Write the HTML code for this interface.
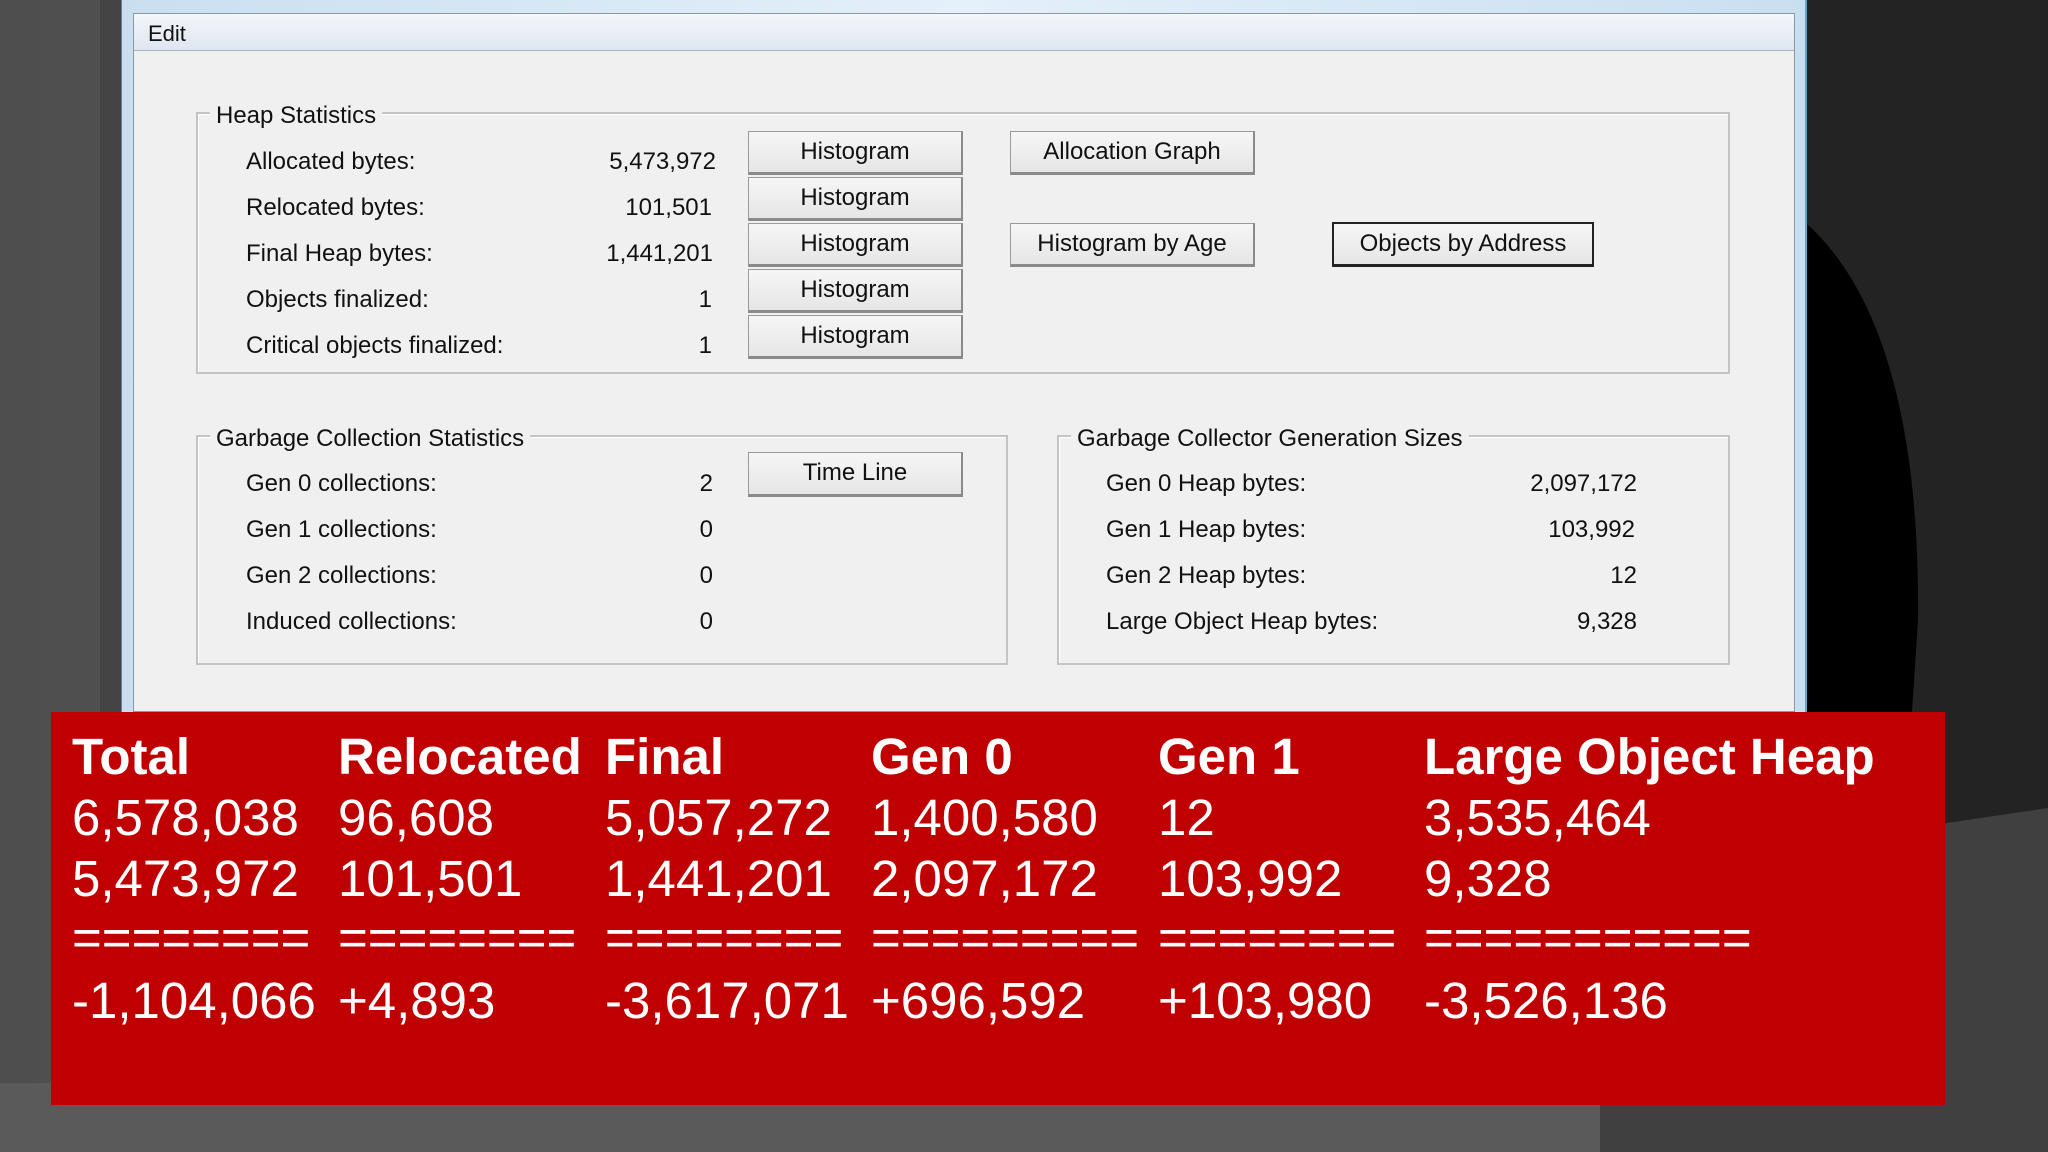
<!DOCTYPE html>
<html><head><meta charset="utf-8"><style>
*{margin:0;padding:0;box-sizing:border-box}
body{width:2048px;height:1152px;overflow:hidden;position:relative;background:linear-gradient(90deg,#4e4e4e,#5a5a5a 40%,#4a4a4a);font-family:"Liberation Sans",sans-serif}
.abs{position:absolute}
.win{left:121px;top:0;width:1686px;height:712px;background:linear-gradient(90deg,#c9dff0,#e4f0fa 50%,#c9dff0);border-left:1px solid #6a7f95;border-right:2px solid #5fa8c8}
.client{left:133px;top:13px;width:1662px;height:699px;background:#f0f0f0;border:1px solid #8a98a8}
.menu{left:0;top:0;width:100%;height:37px;background:linear-gradient(#f4f7fb,#dfe6f0);border-bottom:1px solid #aab4c2;font-size:22px;color:#111;padding:7px 14px}
.grp{border:2px solid #c4c4c4;box-shadow:inset 1px 1px 0 #fff}
.gt{background:#f0f0f0;font-size:24px;color:#111;padding:0 6px;top:-12px;left:12px;white-space:nowrap}
.t{font-size:24px;color:#111;white-space:nowrap}
.v{font-size:24px;color:#111;text-align:right;white-space:nowrap}
.btn{background:linear-gradient(#f6f6f6,#e6e6e6);border:1px solid #9a9a9a;border-bottom:3px solid #8a8a8a;border-right:2px solid #8a8a8a;font-size:24px;color:#111;text-align:center;line-height:40px}
.red{left:51px;top:712px;width:1894px;height:393px;background:#c00000}
.r{color:#fff;font-size:51px;white-space:nowrap;line-height:1}
.h{font-weight:bold}
.eq{font-size:51px;top:912px}
</style></head><body>
<div class="abs" style="left:1807px;top:0;width:241px;height:1152px;background:#232323"></div>
<svg class="abs" style="left:0;top:0" width="2048" height="1152"><path d="M1807 224 C1880 290 1920 420 1918 620 L1912 712 L1807 712Z" fill="#000"/><path d="M1900 830 L2048 808 L2048 1152 L1900 1152Z" fill="#414041"/></svg>
<div class="abs" style="left:1600px;top:1100px;width:448px;height:52px;background:#414041"></div>
<div class="abs" style="left:0;top:1083px;width:1600px;height:69px;background:#5a5a5a"></div>
<div class="abs" style="left:100px;top:0;width:21px;height:712px;background:#444"></div>

<div class="abs win"></div>
<div class="abs client">
 <div class="abs menu">Edit</div>
</div>

<div class="abs grp" style="left:196px;top:112px;width:1534px;height:262px"><div class="abs gt">Heap Statistics</div></div>
<div class="abs t" style="left:246px;top:148px">Allocated bytes:</div>
<div class="abs t" style="left:246px;top:194px">Relocated bytes:</div>
<div class="abs t" style="left:246px;top:240px">Final Heap bytes:</div>
<div class="abs t" style="left:246px;top:286px">Objects finalized:</div>
<div class="abs t" style="left:246px;top:332px">Critical objects finalized:</div>
<div class="abs v" style="left:516px;width:200px;top:148px">5,473,972</div>
<div class="abs v" style="left:516px;width:196px;top:194px">101,501</div>
<div class="abs v" style="left:516px;width:197px;top:240px">1,441,201</div>
<div class="abs v" style="left:516px;width:196px;top:286px">1</div>
<div class="abs v" style="left:516px;width:196px;top:332px">1</div>
<div class="abs btn" style="left:748px;top:131px;width:215px;height:44px">Histogram</div>
<div class="abs btn" style="left:748px;top:177px;width:215px;height:44px">Histogram</div>
<div class="abs btn" style="left:748px;top:223px;width:215px;height:44px">Histogram</div>
<div class="abs btn" style="left:748px;top:269px;width:215px;height:44px">Histogram</div>
<div class="abs btn" style="left:748px;top:315px;width:215px;height:44px">Histogram</div>
<div class="abs btn" style="left:1010px;top:131px;width:245px;height:44px">Allocation Graph</div>
<div class="abs btn" style="left:1010px;top:223px;width:245px;height:44px">Histogram by Age</div>
<div class="abs btn" style="left:1332px;top:222px;width:262px;height:45px;border:2px solid #222;border-bottom:3px solid #222">Objects by Address</div>

<div class="abs grp" style="left:196px;top:435px;width:812px;height:230px"><div class="abs gt">Garbage Collection Statistics</div></div>
<div class="abs t" style="left:246px;top:470px">Gen 0 collections:</div>
<div class="abs t" style="left:246px;top:516px">Gen 1 collections:</div>
<div class="abs t" style="left:246px;top:562px">Gen 2 collections:</div>
<div class="abs t" style="left:246px;top:608px">Induced collections:</div>
<div class="abs v" style="left:600px;width:113px;top:470px">2</div>
<div class="abs v" style="left:600px;width:113px;top:516px">0</div>
<div class="abs v" style="left:600px;width:113px;top:562px">0</div>
<div class="abs v" style="left:600px;width:113px;top:608px">0</div>
<div class="abs btn" style="left:748px;top:452px;width:215px;height:45px">Time Line</div>

<div class="abs grp" style="left:1057px;top:435px;width:673px;height:230px"><div class="abs gt">Garbage Collector Generation Sizes</div></div>
<div class="abs t" style="left:1106px;top:470px">Gen 0 Heap bytes:</div>
<div class="abs t" style="left:1106px;top:516px">Gen 1 Heap bytes:</div>
<div class="abs t" style="left:1106px;top:562px">Gen 2 Heap bytes:</div>
<div class="abs t" style="left:1106px;top:608px">Large Object Heap bytes:</div>
<div class="abs v" style="left:1400px;width:237px;top:470px">2,097,172</div>
<div class="abs v" style="left:1400px;width:235px;top:516px">103,992</div>
<div class="abs v" style="left:1400px;width:237px;top:562px">12</div>
<div class="abs v" style="left:1400px;width:237px;top:608px">9,328</div>

<div class="abs red"></div>
<div class="abs r h" style="left:72px;top:731px">Total</div>
<div class="abs r h" style="left:338px;top:731px">Relocated</div>
<div class="abs r h" style="left:605px;top:731px">Final</div>
<div class="abs r h" style="left:871px;top:731px">Gen 0</div>
<div class="abs r h" style="left:1158px;top:731px">Gen 1</div>
<div class="abs r h" style="left:1424px;top:731px">Large Object Heap</div>

<div class="abs r" style="left:72px;top:792px">6,578,038</div>
<div class="abs r" style="left:338px;top:792px">96,608</div>
<div class="abs r" style="left:605px;top:792px">5,057,272</div>
<div class="abs r" style="left:871px;top:792px">1,400,580</div>
<div class="abs r" style="left:1158px;top:792px">12</div>
<div class="abs r" style="left:1424px;top:792px">3,535,464</div>

<div class="abs r" style="left:72px;top:853px">5,473,972</div>
<div class="abs r" style="left:338px;top:853px">101,501</div>
<div class="abs r" style="left:605px;top:853px">1,441,201</div>
<div class="abs r" style="left:871px;top:853px">2,097,172</div>
<div class="abs r" style="left:1158px;top:853px">103,992</div>
<div class="abs r" style="left:1424px;top:853px">9,328</div>

<div class="abs r eq" style="left:72px">========</div>
<div class="abs r eq" style="left:338px">========</div>
<div class="abs r eq" style="left:605px">========</div>
<div class="abs r eq" style="left:871px">=========</div>
<div class="abs r eq" style="left:1158px">========</div>
<div class="abs r eq" style="left:1424px">===========</div>

<div class="abs r" style="left:72px;top:975px">-1,104,066</div>
<div class="abs r" style="left:338px;top:975px">+4,893</div>
<div class="abs r" style="left:605px;top:975px">-3,617,071</div>
<div class="abs r" style="left:871px;top:975px">+696,592</div>
<div class="abs r" style="left:1158px;top:975px">+103,980</div>
<div class="abs r" style="left:1424px;top:975px">-3,526,136</div>
</body></html>
